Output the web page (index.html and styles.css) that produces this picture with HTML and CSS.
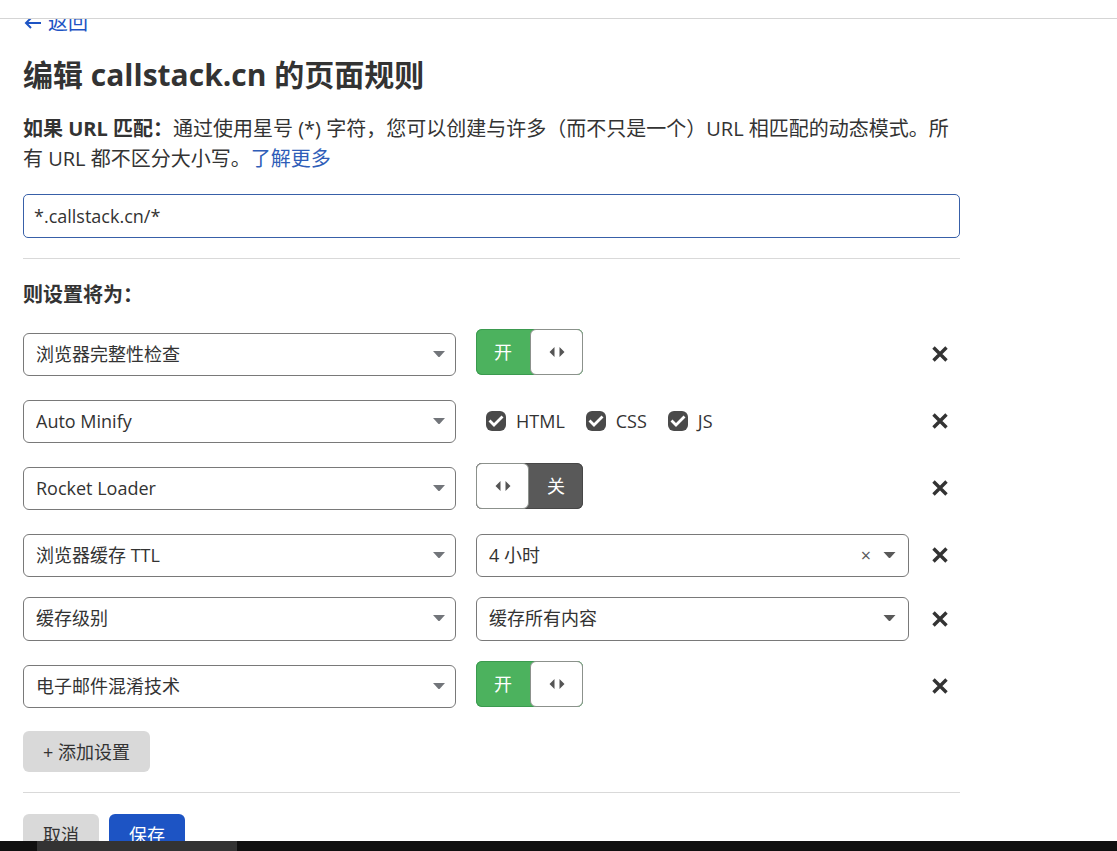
FILE: index.html
```html
<!DOCTYPE html>
<html lang="zh-CN">
<head>
<meta charset="utf-8">
<meta name="viewport" content="width=device-width, initial-scale=1">
<title>编辑 callstack.cn 的页面规则</title>
<link rel="stylesheet" href="styles.css">
</head>
<body>
<svg class="defs" aria-hidden="true">
  <symbol id="caret" viewBox="0 0 12 6"><path d="M0 0h12L7 5.500Q6 6.500 5 5.500z"/></symbol>
  <symbol id="cross" viewBox="0 0 16 16"><path d="M1.500 1.500l13 13M14.500 1.500l-13 13" fill="none" stroke="currentColor" stroke-width="3.400"/></symbol>
  <symbol id="handle" viewBox="0 0 16 10"><path d="M5.500 0v10L0.500 5zM10.500 0v10l5-5z"/></symbol>
</svg>
<header class="topbar"></header>
<main class="viewport">
  <form class="rule">
    <a class="back" href="#rules">
      <svg class="back-icon" viewBox="0 0 17 12" aria-hidden="true"><path d="M17 6H2M7 1L2 6l5 5" fill="none" stroke="currentColor" stroke-width="2"/></svg>
      <span>返回</span>
    </a>
    <h1 class="title">编辑 callstack.cn 的页面规则</h1>
    <p class="intro"><label class="strong" for="url">如果 URL 匹配：</label>通过使用星号 (*) 字符，您可以创建与许多（而不只是一个）URL 相匹配的动态模式。所有 URL 都不区分大小写。<a class="more" href="#learn">了解更多</a></p>
    <input class="url" id="url" type="text" value="*.callstack.cn/*">
    <hr class="rule-line">
    <h2 class="subtitle">则设置将为：</h2>
    <div class="settings">
      <div class="row">
        <div class="select"><select aria-label="设置 1"><option>浏览器完整性检查</option></select><svg class="caret" aria-hidden="true"><use href="#caret"/></svg></div>
        <button class="toggle on" type="button" role="switch" aria-checked="true" aria-label="浏览器完整性检查"><span class="state">开</span><span class="knob"><svg class="handle"><use href="#handle"/></svg></span></button>
        <button class="remove" type="button" aria-label="删除"><svg class="cross"><use href="#cross"/></svg></button>
      </div>
      <div class="row">
        <div class="select"><select aria-label="设置 2"><option>Auto Minify</option></select><svg class="caret" aria-hidden="true"><use href="#caret"/></svg></div>
        <div class="checks">
          <label class="check"><span class="box"><input type="checkbox" checked><svg class="tick" viewBox="0 0 20 20"><path d="M3.500 9.500l4.500 4.500 8.500-8.500" fill="none" stroke="#fff" stroke-width="2.800"/></svg></span>HTML</label>
          <label class="check"><span class="box"><input type="checkbox" checked><svg class="tick" viewBox="0 0 20 20"><path d="M3.500 9.500l4.500 4.500 8.500-8.500" fill="none" stroke="#fff" stroke-width="2.800"/></svg></span>CSS</label>
          <label class="check"><span class="box"><input type="checkbox" checked><svg class="tick" viewBox="0 0 20 20"><path d="M3.500 9.500l4.500 4.500 8.500-8.500" fill="none" stroke="#fff" stroke-width="2.800"/></svg></span>JS</label>
        </div>
        <button class="remove" type="button" aria-label="删除"><svg class="cross"><use href="#cross"/></svg></button>
      </div>
      <div class="row">
        <div class="select"><select aria-label="设置 3"><option>Rocket Loader</option></select><svg class="caret" aria-hidden="true"><use href="#caret"/></svg></div>
        <button class="toggle off" type="button" role="switch" aria-checked="false" aria-label="Rocket Loader"><span class="knob"><svg class="handle"><use href="#handle"/></svg></span><span class="state">关</span></button>
        <button class="remove" type="button" aria-label="删除"><svg class="cross"><use href="#cross"/></svg></button>
      </div>
      <div class="row">
        <div class="select"><select aria-label="设置 4"><option>浏览器缓存 TTL</option></select><svg class="caret" aria-hidden="true"><use href="#caret"/></svg></div>
        <div class="select value"><select aria-label="浏览器缓存 TTL"><option>4 小时</option></select><button class="clear" type="button" aria-label="清除">×</button><svg class="caret" aria-hidden="true"><use href="#caret"/></svg></div>
        <button class="remove" type="button" aria-label="删除"><svg class="cross"><use href="#cross"/></svg></button>
      </div>
      <div class="row compact">
        <div class="select"><select aria-label="设置 5"><option>缓存级别</option></select><svg class="caret" aria-hidden="true"><use href="#caret"/></svg></div>
        <div class="select value"><select aria-label="缓存级别"><option>缓存所有内容</option></select><svg class="caret" aria-hidden="true"><use href="#caret"/></svg></div>
        <button class="remove" type="button" aria-label="删除"><svg class="cross"><use href="#cross"/></svg></button>
      </div>
      <div class="row">
        <div class="select"><select aria-label="设置 6"><option>电子邮件混淆技术</option></select><svg class="caret" aria-hidden="true"><use href="#caret"/></svg></div>
        <button class="toggle on" type="button" role="switch" aria-checked="true" aria-label="电子邮件混淆技术"><span class="state">开</span><span class="knob"><svg class="handle"><use href="#handle"/></svg></span></button>
        <button class="remove" type="button" aria-label="删除"><svg class="cross"><use href="#cross"/></svg></button>
      </div>
    </div>
    <button class="btn add" type="button">+ 添加设置</button>
    <hr class="rule-line">
    <div class="actions">
      <button class="btn" type="button">取消</button>
      <button class="btn primary" type="submit">保存</button>
    </div>
  </form>
</main>
<footer class="bottombar"><div class="thumb"></div></footer>
</body>
</html>
```

FILE: styles.css
```css
* { box-sizing: border-box; }

body {
  margin: 0;
  height: 100vh;
  display: flex;
  flex-direction: column;
  overflow: hidden;
  background: #fff;
  color: #333;
  font-family: "Open Sans", "Noto Sans CJK SC", sans-serif;
  font-size: 18px;
}

button, input, select { font: inherit; color: inherit; }
button { cursor: pointer; }
.defs { display: none; }

.topbar { flex: none; height: 19px; border-bottom: 1px solid #d5d5d5; }
.viewport { flex: 1; min-height: 0; overflow: hidden; padding: 0 23px; }
.rule { max-width: 937px; margin-top: -12px; }

.back {
  display: inline-flex;
  align-items: center;
  gap: 7px;
  height: 32px;
  padding-left: 1px;
  font-size: 20px;
  line-height: 28px;
  color: #1d54c4;
  text-decoration: none;
}
.back-icon { width: 17px; height: 12px; }

.title { margin: 12px 0 0; font-size: 30px; line-height: 48px; font-weight: 700; }
.intro { margin: 15px 0 20px; font-size: 20px; line-height: 30px; }
.strong { font-weight: 700; }
.more { color: #2f5db8; text-decoration: none; }

.url {
  display: block;
  width: 100%;
  height: 44px;
  padding: 0 10px;
  border: 1px solid #3860a8;
  border-radius: 5px;
  background: #fff;
}

.rule-line { margin: 20px 0; border: 0; border-top: 1px solid #d9d9d9; }
.subtitle { margin: 0 0 18px; font-size: 20px; line-height: 32px; font-weight: 700; }

.settings { display: grid; gap: 20px; }
.row {
  display: grid;
  grid-template-columns: 1fr 1fr 31px;
  column-gap: 20px;
  min-height: 47px;
  align-items: end;
}
.row.compact { min-height: 44px; }

.select {
  display: grid;
  grid-template-columns: 1fr auto auto;
  align-items: center;
  height: 43px;
  padding-bottom: 2px;
  border: 1px solid #797979;
  border-radius: 6px;
  color: #72757a;
}
.compact .select { height: 44px; }
.select select {
  grid-area: 1 / 1 / 2 / 4;
  width: 100%;
  height: 39px;
  padding: 0 40px 0 12px;
  border: 0;
  background: none;
  color: #333;
  appearance: none;
}
.caret { grid-area: 1 / 3; width: 12px; height: 6px; margin-right: 10px; fill: currentColor; pointer-events: none; }
.value { color: #595959; }
.value .caret { width: 13px; margin-right: 12px; }
.clear { grid-area: 1 / 2; padding: 0; margin-right: 12px; border: 0; background: none; line-height: 20px; }

.toggle {
  display: flex;
  align-self: start;
  justify-self: start;
  width: 107px;
  height: 46px;
  padding: 0;
  border: 0;
  border-radius: 6px;
  color: #fff;
}
.toggle.on { background: #4cb25e; box-shadow: inset 0 0 0 1px #3b9a4f; }
.toggle.off { background: #595959; box-shadow: inset 0 0 0 1px #474747; }
.state { flex: 1; line-height: 46px; text-align: center; }
.knob {
  display: flex;
  align-items: center;
  justify-content: center;
  width: 53px;
  height: 46px;
  border: 1px solid #8c918c;
  border-radius: 6px;
  background: #fff;
  color: #555;
}
.handle { width: 16px; height: 10px; fill: currentColor; }

.checks { display: flex; align-items: center; gap: 21px; height: 43px; padding: 0 0 2px 10px; }
.check { display: flex; align-items: center; gap: 10px; }
.box { display: grid; width: 20px; height: 20px; }
.box input { grid-area: 1 / 1; width: 20px; height: 20px; margin: 0; appearance: none; border-radius: 6px; background: #4a4a4a; }
.tick { grid-area: 1 / 1; width: 20px; height: 20px; pointer-events: none; }

.remove { display: grid; place-items: center start; height: 43px; padding: 0 3px 2px; border: 0; background: none; }
.cross { width: 16px; height: 16px; }

.btn { height: 41px; padding: 0 20px 2px; border: 0; border-radius: 6px; background: #d9d9d9; }
.btn.primary { background: #1d54c4; color: #fff; }
.add { display: block; margin-top: 23px; }
.actions { display: flex; gap: 10px; padding-top: 1px; }

.bottombar { flex: none; height: 10px; padding-left: 37px; background: #101010; }
.thumb { width: 200px; height: 10px; background: #333; }
```
